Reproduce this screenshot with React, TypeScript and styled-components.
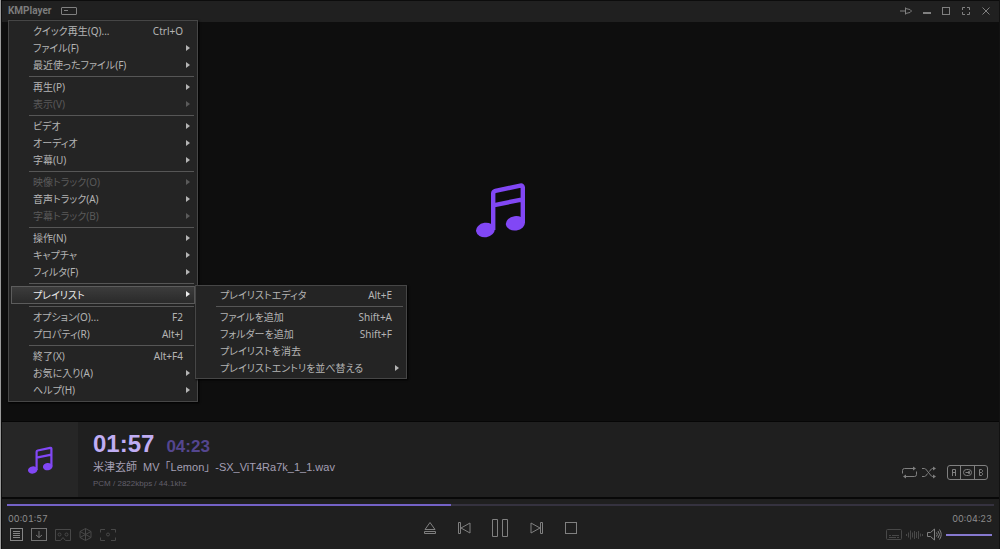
import React from "react";
import styled, { createGlobalStyle } from "styled-components";

const Global = createGlobalStyle`
  *, *::before, *::after { box-sizing: border-box; }
  html, body { margin: 0; padding: 0; background: #0e0e0e; }
  body { font-family: "Liberation Sans", "Noto Sans CJK JP", sans-serif; color: #a0a0a0; }
  svg { display: block; fill: none; stroke: currentColor; stroke-width: 1; }
`;

const Window = styled.div`
  position: relative;
  min-height: 100vh;
  display: flex;
  flex-direction: column;
  background: #0e0e0e;
  border-left: 1px solid #9a9a9a;
  border-right: 1px solid #121212;
  padding-left: 1px;
`;

const TitleBar = styled.header`
  display: flex;
  align-items: center;
  height: 22px;
  padding: 0 8px 2px 6px;
  background: #202020;
  border-top: 1px solid #0c0c0c;
`;

const AppName = styled.h1`
  margin: 0 9px 0 0;
  font: 700 10px/12px Roboto, sans-serif;
  color: #7c7c7c;
`;

const IconButton = styled.button<{ $tone?: string }>`
  display: block;
  flex: none;
  margin: 0;
  padding: 0;
  border: 0;
  background: none;
  color: ${(p) => p.$tone ?? "#808080"};
`;

const WindowButtons = styled.div`
  display: flex;
  align-items: center;
  gap: 10px;
  margin-left: auto;
`;

const Stage = styled.main`
  flex: 1;
  display: flex;
  align-items: center;
  justify-content: center;
  min-height: 398px;
  padding-bottom: 24px;
  color: #8147f5;
`;

const MenuPanel = styled.ul<{ $sub?: boolean }>`
  position: absolute;
  z-index: ${(p) => (p.$sub ? 2 : 1)};
  left: ${(p) => (p.$sub ? "194px" : "7px")};
  top: ${(p) => (p.$sub ? "285px" : "20px")};
  width: ${(p) => (p.$sub ? "212px" : "190px")};
  margin: 0;
  padding: ${(p) => (p.$sub ? "1px 2px" : "2px")};
  list-style: none;
  background: #242424;
  border: 1px solid #464646;
  box-shadow: 1px 1px 2px #000;
`;

const MenuRow = styled.li`
  display: block;
`;

const MenuButton = styled.button<{ $active?: boolean }>`
  display: flex;
  align-items: center;
  width: 100%;
  height: ${(p) => (p.$active ? "18px" : "17px")};
  margin: 0;
  padding: 0 4px 0 21px;
  border: 1px solid ${(p) => (p.$active ? "#5c5c5c" : "transparent")};
  background: ${(p) => (p.$active ? "linear-gradient(#3c3c3c, #2a2a2a)" : "none")};
  color: ${(p) => (p.$active ? "#ececec" : "#b4b4b4")};
  font: 10px/15px "Noto Sans", "Noto Sans CJK JP", sans-serif;
  font-feature-settings: "palt";
  text-align: left;
  white-space: nowrap;
  &:disabled { color: #5a5a5a; }
`;

const Shortcut = styled.span`
  margin-left: auto;
  padding-right: 7px;
`;

const Arrow = styled.span`
  margin: 0 0 2px auto;
  border: 3px solid transparent;
  border-left: 4px solid currentColor;
  border-right: 0;
`;

const Separator = styled.li`
  height: 5px;
  margin: 0 1px 0 18px;
  padding-top: 2px;
  &::before { content: ""; display: block; height: 1px; background: #565656; }
`;

const NowPlaying = styled.section`
  display: flex;
  height: 76px;
  border-top: 1px solid #060606;
  background: #1f1f1f;
`;

const Cover = styled.div`
  display: flex;
  align-items: center;
  justify-content: center;
  width: 76px;
  background: #262626;
  color: #8147f5;
`;

const TrackInfo = styled.div`
  flex: 1;
  padding: 8px 0 0 15px;
`;

const Clock = styled.div`
  display: flex;
  align-items: baseline;
  gap: 12px;
  font-weight: 700;
`;

const Elapsed = styled.span`
  font-size: 24px;
  line-height: 28px;
  color: #c0adf3;
`;

const Total = styled.span`
  font-size: 17px;
  line-height: 20px;
  color: #54468f;
`;

const TrackTitle = styled.h2`
  margin: 1px 0 0;
  font-size: 11px;
  font-weight: 400;
  line-height: 16px;
  white-space: pre;
  color: #a49fb4;
`;

const TrackMeta = styled.p`
  margin: 3px 0 0;
  font-size: 8px;
  line-height: 12px;
  color: #625f6b;
`;

const ModeButtons = styled.div`
  display: flex;
  align-items: center;
  gap: 4px;
  padding: 25px 11px 0 0;
`;

const Spacer = styled.span`
  width: 3px;
`;

const Footer = styled.footer`
  border-top: 2px solid #080808;
  background: #1f1f1f;
`;

const Seek = styled.div`
  height: 2px;
  margin: 5px 5px 0;
  background: #35323f;
`;

const SeekFill = styled.div`
  height: 2px;
  background: #7462c6;
`;

const Controls = styled.div`
  display: grid;
  grid-template-columns: 1fr auto 1fr;
  height: 43px;
  padding: 6px 7px 0 6px;
`;

const Side = styled.div<{ $end?: boolean }>`
  display: flex;
  flex-direction: column;
  align-items: ${(p) => (p.$end ? "flex-end" : "flex-start")};
`;

const TimeLabel = styled.span`
  font: 9px/14px Inter, sans-serif;
  font-variant-numeric: tabular-nums;
  color: #8c8c8c;
`;

const ToolRow = styled.div<{ $gap: number }>`
  display: flex;
  align-items: center;
  height: 17px;
  padding-left: 2px;
  gap: ${(p) => p.$gap}px;
`;

const Transport = styled.div`
  display: flex;
  align-items: center;
  gap: 21px;
  height: 32px;
`;

const Volume = styled.input`
  appearance: none;
  width: 46px;
  height: 2px;
  margin: 0;
  background: #8679cf;
  &::-webkit-slider-thumb { appearance: none; width: 0; height: 0; }
`;

function Note({ width, height }: { width: number; height: number }) {
  return (
    <svg width={width} height={height} viewBox="1 0 50 56" aria-hidden="true">
      <path
        d="M18.200 48V11.700Q18.200 9.400 20.400 8.900L45.300 3.600Q47.800 3.100 47.800 5.600V41M18.200 23.300L47.800 17.400"
        strokeWidth="4.400"
      />
      <g fill="currentColor" stroke="none">
        <ellipse cx="10.400" cy="48" rx="9.400" ry="7.200" transform="rotate(-8 10.400 48)" />
        <ellipse cx="40.400" cy="41.300" rx="9.600" ry="7.200" transform="rotate(-8 40.400 41.300)" />
      </g>
    </svg>
  );
}

type Item = { label: string; keys?: string; sub?: boolean; off?: boolean; active?: boolean };

const mainMenu: Item[][] = [
  [{ label: "クイック再生(Q)...", keys: "Ctrl+O" }, { label: "ファイル(F)", sub: true }, { label: "最近使ったファイル(F)", sub: true }],
  [{ label: "再生(P)", sub: true }, { label: "表示(V)", sub: true, off: true }],
  [{ label: "ビデオ", sub: true }, { label: "オーディオ", sub: true }, { label: "字幕(U)", sub: true }],
  [{ label: "映像トラック(O)", sub: true, off: true }, { label: "音声トラック(A)", sub: true }, { label: "字幕トラック(B)", sub: true, off: true }],
  [{ label: "操作(N)", sub: true }, { label: "キャプチャ", sub: true }, { label: "フィルタ(F)", sub: true }],
  [{ label: "プレイリスト", sub: true, active: true }],
  [{ label: "オプション(O)...", keys: "F2" }, { label: "プロパティ(R)", keys: "Alt+J" }],
  [{ label: "終了(X)", keys: "Alt+F4" }, { label: "お気に入り(A)", sub: true }, { label: "ヘルプ(H)", sub: true }],
];

const playlistMenu: Item[][] = [
  [{ label: "プレイリストエディタ", keys: "Alt+E" }],
  [
    { label: "ファイルを追加", keys: "Shift+A" },
    { label: "フォルダーを追加", keys: "Shift+F" },
    { label: "プレイリストを消去" },
    { label: "プレイリストエントリを並べ替える", sub: true },
  ],
];

function Menu({ groups, sub }: { groups: Item[][]; sub?: boolean }) {
  return (
    <MenuPanel $sub={sub}>
      {groups.map((group, g) => (
        <React.Fragment key={g}>
          {g > 0 && <Separator role="separator" />}
          {group.map((item) => (
            <MenuRow key={item.label}>
              <MenuButton type="button" disabled={item.off} $active={item.active}>
                <span>{item.label}</span>
                {item.keys && <Shortcut>{item.keys}</Shortcut>}
                {item.sub && <Arrow />}
              </MenuButton>
            </MenuRow>
          ))}
        </React.Fragment>
      ))}
    </MenuPanel>
  );
}

export default function App() {
  return (
    <>
      <Global />
      <Window>
        <TitleBar>
          <AppName>KMPlayer</AppName>
          <IconButton aria-label="Compact mode">
            <svg width="16" height="8" viewBox="0 0 16 8">
              <rect x=".5" y=".5" width="15" height="7" rx=".5" />
              <path d="M3 3.500h4" />
            </svg>
          </IconButton>
          <WindowButtons>
            <IconButton aria-label="Pin">
              <svg width="12" height="10" viewBox="0 0 12 10">
                <path d="M0 5h5M5.500 1.500v7M5.500 2.500L10 3.500l1.500 1.500L10 6.500l-4.500 1" />
              </svg>
            </IconButton>
            <IconButton aria-label="Minimize">
              <svg width="9" height="10" viewBox="0 0 9 10">
                <path d="M1 7h8" strokeWidth="2" />
              </svg>
            </IconButton>
            <IconButton aria-label="Maximize">
              <svg width="10" height="10" viewBox="0 0 10 10">
                <rect x="1.500" y="1.500" width="7" height="7" />
              </svg>
            </IconButton>
            <IconButton aria-label="Full screen">
              <svg width="10" height="10" viewBox="0 0 10 10">
                <path d="M1.500 4V1.500H4M6 1.500h2.500V4M8.500 6v2.500H6M4 8.500H1.500V6" />
              </svg>
            </IconButton>
            <IconButton aria-label="Close">
              <svg width="10" height="10" viewBox="0 0 10 10">
                <path d="M1.500 1.500l7 7M8.500 1.500l-7 7" />
              </svg>
            </IconButton>
          </WindowButtons>
        </TitleBar>

        <Stage>
          <Note width={50} height={56} />
        </Stage>

        <NowPlaying>
          <Cover>
            <Note width={25} height={28} />
          </Cover>
          <TrackInfo>
            <Clock>
              <Elapsed>01:57</Elapsed>
              <Total>04:23</Total>
            </Clock>
            <TrackTitle>{"米津玄師  MV「Lemon」-SX_ViT4Ra7k_1_1.wav"}</TrackTitle>
            <TrackMeta>PCM / 2822kbps / 44.1khz</TrackMeta>
          </TrackInfo>
          <ModeButtons>
            <IconButton aria-label="Repeat">
              <svg width="17" height="13" viewBox="0 0 17 13">
                <path d="M1.500 7.500V4.500q0-2 2-2H12M15.500 5.500v3q0 2-2 2H5" />
                <path d="M12 .5l3 2-3 2zM5 8.500l-3 2 3 2z" fill="currentColor" stroke="none" />
              </svg>
            </IconButton>
            <IconButton aria-label="Shuffle">
              <svg width="14" height="13" viewBox="0 0 14 13">
                <path d="M0 2.500h2.500q1 0 2 1.500l4 5q1 1.500 2 1.500H12M0 10.500h2.500q1 0 2-1.500l1-1.500M7.500 5.500l1-1.500q1-1.500 2-1.500H12" />
                <path d="M11 .5l3 2-3 2zM11 8.500l3 2-3 2z" fill="currentColor" stroke="none" />
              </svg>
            </IconButton>
            <Spacer />
            <IconButton aria-label="A-B repeat">
              <svg width="41" height="15" viewBox="0 0 41 15">
                <rect x=".5" y=".5" width="40" height="14" rx="2.500" />
                <path d="M13.500 1v13M27.500 1v13" />
                <path d="M5.500 11V4.500h3V11M5.500 7.500h3M32.500 4.500h2l1 1v1l-1 1 1 1v1l-1 1h-2zM32.500 7.500h2" />
                <rect x="16.500" y="4.500" width="8" height="6" rx="3" />
                <path d="M18.500 7.500h3M21.500 6.500h1v2h-1z" />
              </svg>
            </IconButton>
          </ModeButtons>
        </NowPlaying>

        <Footer>
          <Seek role="progressbar" aria-label="Playback position" aria-valuenow={45}>
            <SeekFill style={{ width: `${(117 / 260) * 100}%` }} />
          </Seek>
          <Controls>
            <Side>
              <TimeLabel>00:01:57</TimeLabel>
              <ToolRow $gap={8}>
                <IconButton aria-label="Playlist" $tone="#858585">
                  <svg width="13" height="13" viewBox="0 0 13 13">
                    <rect x=".5" y=".5" width="12" height="12" />
                    <path d="M3 3.500h7M3 5.500h7M3 7.500h7M3 9.500h7" />
                  </svg>
                </IconButton>
                <IconButton aria-label="Download" $tone="#747474">
                  <svg width="16" height="13" viewBox="0 0 16 13">
                    <rect x=".5" y=".5" width="15" height="12" />
                    <path d="M8 3v6.500M5 7l3 2.500L11 7" />
                  </svg>
                </IconButton>
                <IconButton aria-label="VR" $tone="#484848">
                  <svg width="16" height="13" viewBox="0 0 16 13">
                    <path d="M.5 1.500h15v11h-5L8 9.500l-2.500 3h-5z" />
                    <circle cx="4.500" cy="6.500" r="1.500" />
                    <circle cx="11.500" cy="6.500" r="1.500" />
                  </svg>
                </IconButton>
                <IconButton aria-label="3D" $tone="#484848">
                  <svg width="13" height="13" viewBox="0 0 13 13">
                    <path d="M6.500.5l5.500 3v6l-5.500 3-5.500-3v-6zM1 3.500l5.500 3 5.500-3M6.500 6.500v6M6.500.5v6L1 9.500M6.500 6.500l5.500 3" />
                  </svg>
                </IconButton>
                <IconButton aria-label="Capture" $tone="#484848">
                  <svg width="16" height="13" viewBox="0 0 16 13">
                    <path d="M.5 4.500v-3H5M11 1.500h4.500v3M15.500 9.500v3H11M5 12.500H.5v-3" />
                    <circle cx="8" cy="6.500" r="1.500" />
                  </svg>
                </IconButton>
              </ToolRow>
            </Side>
            <Transport>
              <IconButton aria-label="Eject">
                <svg width="12" height="14" viewBox="0 0 12 14">
                  <path d="M6 1.500L11 8.500H1zM.5 10.500h11v2H.5z" />
                </svg>
              </IconButton>
              <IconButton aria-label="Previous">
                <svg width="14" height="14" viewBox="0 0 14 14">
                  <path d="M1.500 1.500h2v11h-2zM13 2v10L4 7z" />
                </svg>
              </IconButton>
              <IconButton aria-label="Pause">
                <svg width="17" height="18" viewBox="0 0 17 18">
                  <path d="M.5.5h5v17h-5zM10.500.5h5v17h-5z" />
                </svg>
              </IconButton>
              <IconButton aria-label="Next">
                <svg width="14" height="14" viewBox="0 0 14 14">
                  <path d="M10.500 1.500h2v11h-2zM1 2v10l9-5z" />
                </svg>
              </IconButton>
              <IconButton aria-label="Stop">
                <svg width="12" height="14" viewBox="0 0 12 14">
                  <rect x=".5" y="1.500" width="11" height="11" />
                </svg>
              </IconButton>
            </Transport>
            <Side $end>
              <TimeLabel>00:04:23</TimeLabel>
              <ToolRow $gap={4}>
                <IconButton aria-label="Subtitles" $tone="#484848">
                  <svg width="16" height="13" viewBox="0 0 16 13">
                    <rect x=".5" y="1.500" width="15" height="10" rx="1" />
                    <path d="M3 7.500h2M6 7.500h7M3 9.500h7M11 9.500h2" />
                  </svg>
                </IconButton>
                <IconButton aria-label="Equalizer" $tone="#484848">
                  <svg width="17" height="13" viewBox="0 0 17 13">
                    <path d="M.5 6v2M2.500 4.500v5M4.500 2.500v9M6.500 4.500v5M8.500 3v8M10.500 4v6M12.500 3v8M14.500 5.500v3M16.500 6v2" />
                  </svg>
                </IconButton>
                <IconButton aria-label="Mute">
                  <svg width="15" height="13" viewBox="0 0 15 13">
                    <path d="M.5 4.500h3l4-3.500v11l-4-3.500h-3zM9.500 4.500q1.500 2 0 4M11 3q3 3.500 0 7M12.500 1.500q3.500 5 0 10" />
                  </svg>
                </IconButton>
                <Volume type="range" aria-label="Volume" defaultValue={100} />
              </ToolRow>
            </Side>
          </Controls>
        </Footer>

        <Menu groups={mainMenu} />
        <Menu groups={playlistMenu} sub />
      </Window>
    </>
  );
}
